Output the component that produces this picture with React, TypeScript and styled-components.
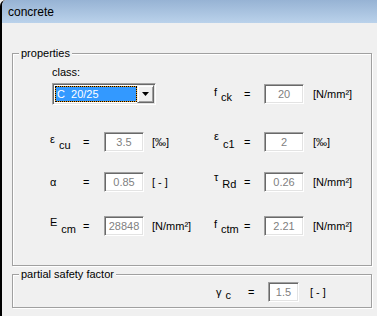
import React from 'react';
import styled, { createGlobalStyle } from 'styled-components';

type Quantity = {
    sym: string;
    sub: string;
    raise: number;
    drop: number;
    value: string;
    unit: string;
};

type PropRow = {
    gap: number;
    left: Quantity;
    right: Quantity;
};

const fck: Quantity = { sym: 'f', sub: 'ck', raise: 2, drop: 3, value: '20', unit: '[N/mm²]' };

const rows: PropRow[] = [
    {
        gap: 27,
        left: { sym: 'ε', sub: 'cu', raise: 3, drop: 3, value: '3.5', unit: '[‰]' },
        right: { sym: 'ε', sub: 'c1', raise: 6, drop: 2, value: '2', unit: '[‰]' },
    },
    {
        gap: 20,
        left: { sym: 'α', sub: '', raise: 0, drop: 0, value: '0.85', unit: '[ - ]' },
        right: { sym: 'τ', sub: 'Rd', raise: 5, drop: 2, value: '0.26', unit: '[N/mm²]' },
    },
    {
        gap: 24,
        left: { sym: 'E', sub: 'cm', raise: 4, drop: 3, value: '28848', unit: '[N/mm²]' },
        right: { sym: 'f', sub: 'ctm', raise: 2, drop: 3, value: '2.21', unit: '[N/mm²]' },
    },
];

const gammaC: Quantity = { sym: 'γ', sub: 'c', raise: 0, drop: 3, value: '1.5', unit: '[ - ]' };

const Global = createGlobalStyle`
    html, body {
        margin: 0;
        background: #f0f0f0;
    }
    body {
        font-family: "Liberation Sans", Arial, sans-serif;
        font-size: 11px;
        color: #000;
    }
`;

const Window = styled.div`
    box-sizing: border-box;
    min-height: 316px;
    border-left: 2px solid #000;
    border-top-left-radius: 6px;
    overflow: hidden;
    background: #f0f0f0;
`;

const TitleBar = styled.div`
    height: 23px;
    box-sizing: border-box;
    padding: 2px 0 0 6px;
    font-size: 12px;
    line-height: 21px;
    background: linear-gradient(#97b3d4, #bad2eb);
`;

const Content = styled.div`
    padding: 30px 0 0 10px;
`;

const Group = styled.div<{ $gap?: number }>`
    position: relative;
    box-sizing: border-box;
    width: 360px;
    margin-top: ${p => p.$gap ?? 0}px;
    border: 1px solid #a0a0a0;
    box-shadow: 1px 1px 0 #fff, inset 1px 1px 0 #fff;
`;

const Caption = styled.span`
    position: absolute;
    top: -7px;
    left: 6px;
    padding: 0 2px;
    line-height: 13px;
    background: #f0f0f0;
`;

const Properties = styled.div`
    padding: 12px 0 29px 37px;
`;

const ClassLabel = styled.div`
    margin-left: 2px;
    line-height: 13px;
`;

const Row = styled.div<{ $gap: number; $tall?: boolean }>`
    display: grid;
    grid-template-columns: 33px 21px 40px 70px 30px 20px 40px auto;
    align-items: center;
    height: ${p => (p.$tall ? 22 : 20)}px;
    margin-top: ${p => p.$gap}px;
    line-height: 13px;
`;

const SafetyRow = styled.div`
    display: grid;
    grid-template-columns: 32px 20px 31px auto;
    align-items: center;
    height: 20px;
    padding: 7px 0 5px 203px;
    line-height: 13px;
`;

const Label = styled.span`
    white-space: nowrap;
`;

const Sym = styled.span<{ $raise: number }>`
    position: relative;
    top: -${p => p.$raise}px;
`;

const Sub = styled.span<{ $drop: number }>`
    position: relative;
    top: ${p => p.$drop}px;
    margin-left: 4px;
`;

const Eq = styled.span``;

const ValueBox = styled.div`
    box-sizing: border-box;
    height: 20px;
    border: 1px solid;
    border-color: #a0a0a0 #fff #fff #a0a0a0;
    box-shadow: inset 1px 1px 0 #696969, inset -1px -1px 0 #e3e3e3;
    background: #fff;
    color: #7f7f7f;
    text-align: center;
    line-height: 18px;
`;

const Unit = styled.span<{ $pad?: number }>`
    padding-left: ${p => p.$pad ?? 8}px;
    white-space: pre;
`;

const Select = styled.div`
    grid-column: 1 / 5;
    display: flex;
    box-sizing: border-box;
    width: 104px;
    height: 22px;
    margin-left: 2px;
    border: 1px solid;
    border-color: #a0a0a0 #fff #fff #a0a0a0;
    box-shadow: inset 1px 1px 0 #696969, inset -1px -1px 0 #e3e3e3;
    padding: 1px;
    background: #fff;
`;

const Selected = styled.div`
    box-sizing: border-box;
    width: 83px;
    height: 16px;
    margin: 1px 0 0 1px;
    padding-left: 1px;
    border: 1px dotted #000;
    background: linear-gradient(#3399ff, #3399ff) padding-box, #e89a1c border-box;
    color: #fff;
    line-height: 14px;
    white-space: pre;
`;

const DropButton = styled.div`
    box-sizing: border-box;
    display: flex;
    align-items: center;
    justify-content: center;
    width: 17px;
    height: 18px;
    margin-left: auto;
    border: 1px solid;
    border-color: #f0f0f0 #696969 #696969 #f0f0f0;
    box-shadow: inset 1px 1px 0 #fff, inset -1px -1px 0 #a0a0a0;
    background: #f0f0f0;
`;

const Quantity = ({ q, unitPad }: { q: Quantity; unitPad?: number }) => (
    <>
        <Label>
            <Sym $raise={q.raise}>{q.sym}</Sym>
            {q.sub && <Sub $drop={q.drop}>{q.sub}</Sub>}
        </Label>
        <Eq>=</Eq>
        <ValueBox>{q.value}</ValueBox>
        <Unit $pad={unitPad}>{q.unit}</Unit>
    </>
);

export default function App() {
    return (
        <>
            <Global />
            <Window>
                <TitleBar>concrete</TitleBar>
                <Content>
                    <Group>
                        <Caption>properties</Caption>
                        <Properties>
                            <ClassLabel>class:</ClassLabel>
                            <Row $gap={4} $tall>
                                <Select>
                                    <Selected>{'C  20/25'}</Selected>
                                    <DropButton>
                                        <svg width="7" height="4" viewBox="0 0 7 4">
                                            <polygon points="0,0 7,0 3.5,4" fill="#000" />
                                        </svg>
                                    </DropButton>
                                </Select>
                                <Quantity q={fck} unitPad={9} />
                            </Row>
                            {rows.map((r, i) => (
                                <Row key={i} $gap={r.gap}>
                                    <Quantity q={r.left} />
                                    <Quantity q={r.right} unitPad={9} />
                                </Row>
                            ))}
                        </Properties>
                    </Group>
                    <Group $gap={8}>
                        <Caption>partial safety factor</Caption>
                        <SafetyRow>
                            <Quantity q={gammaC} unitPad={11} />
                        </SafetyRow>
                    </Group>
                </Content>
            </Window>
        </>
    );
}
